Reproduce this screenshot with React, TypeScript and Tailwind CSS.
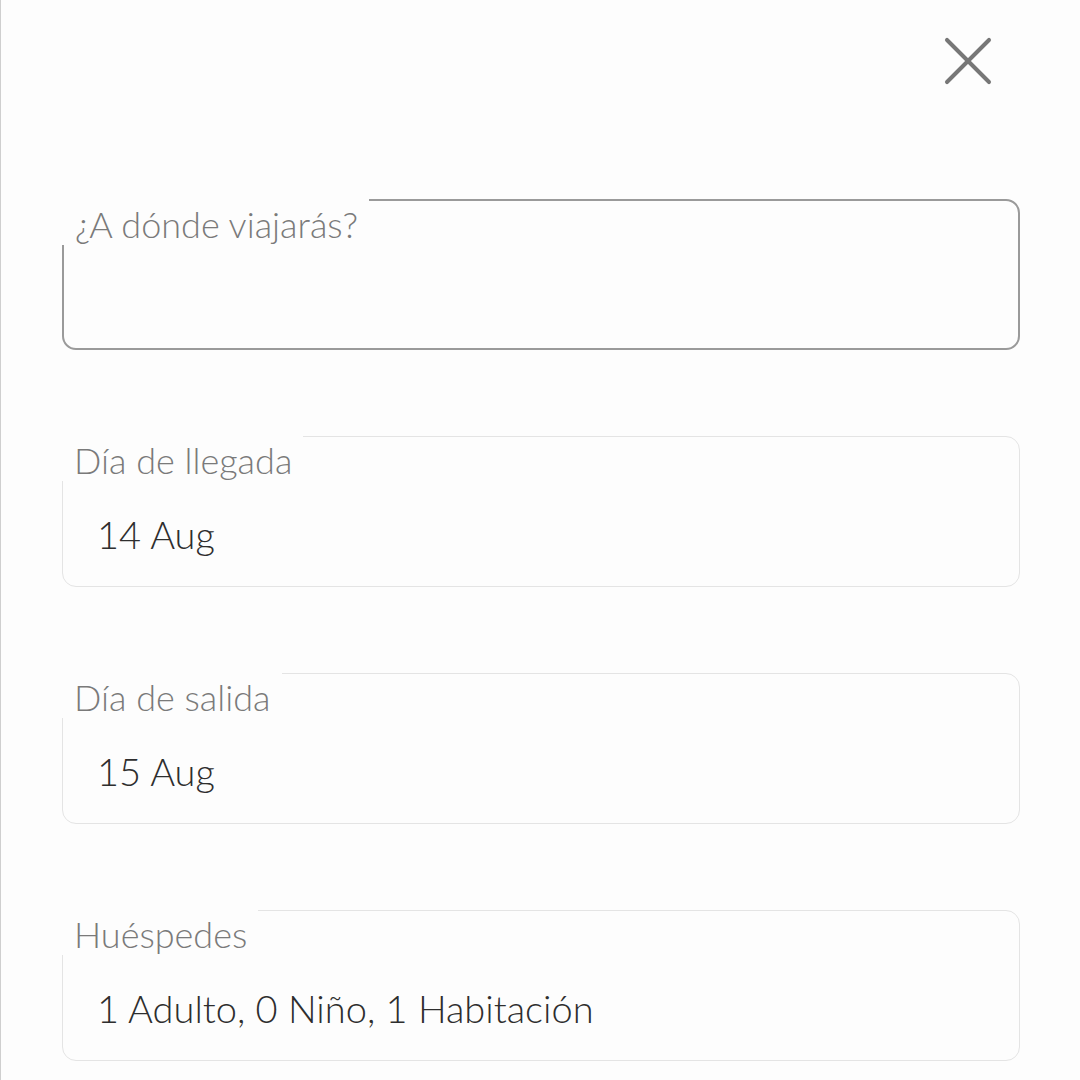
import { X } from 'lucide-react';

interface FieldProps {
  label: string;
  value?: string;
  active?: boolean;
}

function Field({ label, value, active }: FieldProps) {
  return (
    <div
      className={`relative h-[151px] rounded-[14px] ${
        active ? 'border-2 border-[#9a9a9a]' : 'border border-[#e4e4e4]'
      }`}
    >
      <span className="absolute left-[-6px] top-[-6px] bg-[#fdfdfd] pl-[17px] pr-[11px] pt-[11px] pb-[3px] text-[36px] leading-[36px] font-light text-[#7a7a7a]">
        {label}
      </span>
      {value && (
        <div className="pl-[34px] pt-[75px] text-[38px] leading-[44px] font-light text-[#2e2e2e]">
          {value}
        </div>
      )}
    </div>
  );
}

export default function App() {
  return (
    <div
      className="h-[1080px] w-[1080px] overflow-hidden border-l border-[#cfcfcf] bg-[#fdfdfd]"
      style={{ fontFamily: 'Lato, "Open Sans", sans-serif' }}
    >
      <div className="flex justify-end pr-[70px] pt-[19px]">
        <X className="h-[84px] w-[84px] text-[#777]" strokeWidth={1.15} />
      </div>
      <div className="flex flex-col gap-[86px] pl-[61px] pr-[60px] pt-[96px]">
        <Field label="¿A dónde viajarás?" active />
        <Field label="Día de llegada" value="14 Aug" />
        <Field label="Día de salida" value="15 Aug" />
        <Field label="Huéspedes" value="1 Adulto, 0 Niño, 1 Habitación" />
      </div>
    </div>
  );
}
